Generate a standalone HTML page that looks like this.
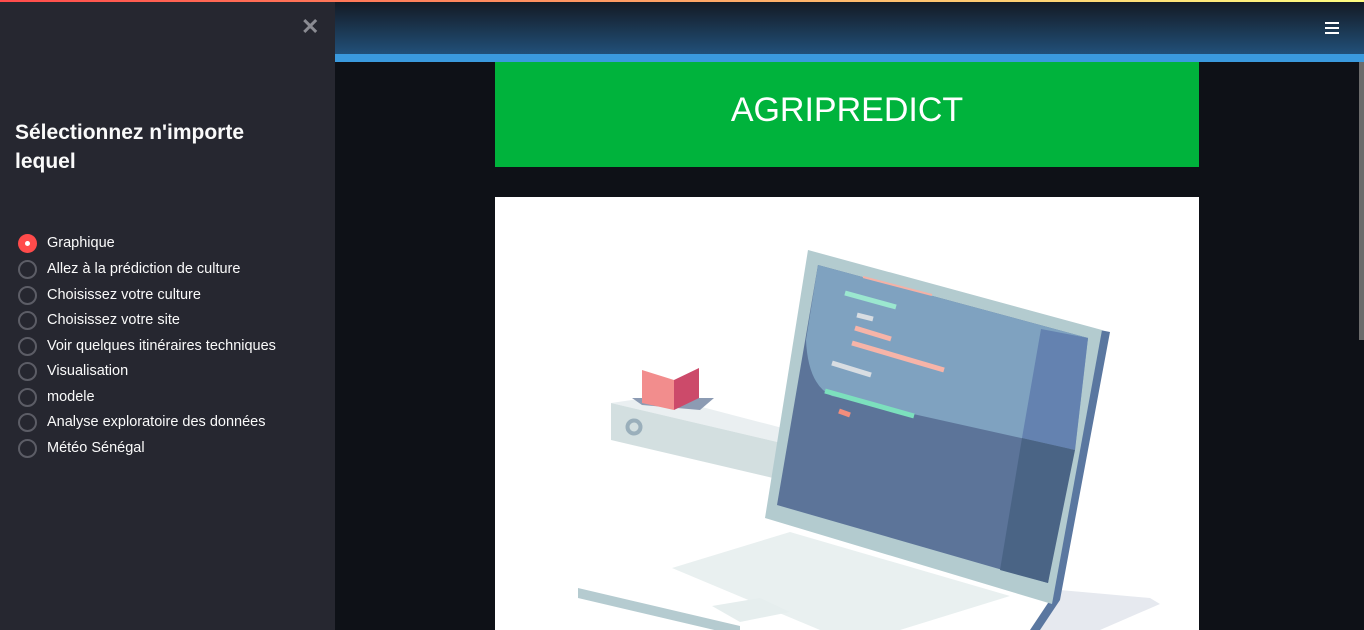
<!DOCTYPE html>
<html><head><meta charset="utf-8"><style>
*{margin:0;padding:0;box-sizing:border-box}
body{width:1364px;height:630px;overflow:hidden;background:#0e1117;font-family:"Liberation Sans",sans-serif;position:relative}
.topbar{position:absolute;left:0;top:0;width:1364px;height:2px;background:linear-gradient(90deg,#ff4b4b,#fffd80)}
.side{position:absolute;left:0;top:2px;width:335px;height:628px;background:#262730;color:#fafafa}
.close{position:absolute;left:301px;top:12px;font-size:22px;color:#8a8b92;font-weight:bold}
.side h2{position:absolute;left:15px;top:116px;font-size:21px;line-height:29px;font-weight:bold;width:250px}
.radio{position:absolute;left:18px;height:20px;display:flex;align-items:center;font-size:14.5px;color:#fafafa}
.radio i{width:19px;height:19px;border-radius:50%;border:2px solid #5c5d66;display:inline-block;margin-right:10px}
.radio i.on{border:none;background:#ff4b4b;position:relative}
.radio i.on:after{content:"";position:absolute;left:7px;top:7px;width:5px;height:5px;border-radius:50%;background:#fff}
.hdr{position:absolute;left:335px;top:2px;width:1029px;height:52px;background:linear-gradient(180deg,#141a24,#215079)}
.blue{position:absolute;left:335px;top:54px;width:1029px;height:8px;background:#3a9ade}
.menu{position:absolute;left:1325px;top:22px;width:14px}
.menu div{height:2px;background:#fff;margin-bottom:3px}
.green{position:absolute;left:495px;top:62px;width:704px;height:105px;background:#00b33c;color:#fff;font-size:34px;text-align:center;line-height:96px}
.img{position:absolute;left:495px;top:197px;width:704px;height:433px;background:#fff;overflow:hidden}
.scroll{position:absolute;left:1359px;top:62px;width:5px;height:278px;background:#6b6b6b}
</style></head><body>
<div class="topbar"></div>
<div class="side">
<div class="close">✕</div>
<h2>Sélectionnez n'importe lequel</h2>
</div>
<div class="radio" style="top:233px"><i class="on"></i>Graphique</div>
<div class="radio" style="top:259px"><i></i>Allez à la prédiction de culture</div>
<div class="radio" style="top:285px"><i></i>Choisissez votre culture</div>
<div class="radio" style="top:310px"><i></i>Choisissez votre site</div>
<div class="radio" style="top:336px"><i></i>Voir quelques itinéraires techniques</div>
<div class="radio" style="top:361px"><i></i>Visualisation</div>
<div class="radio" style="top:387px"><i></i>modele</div>
<div class="radio" style="top:412px"><i></i>Analyse exploratoire des données</div>
<div class="radio" style="top:438px"><i></i>Météo Sénégal</div>
<div class="hdr"></div>
<div class="blue"></div>
<div class="menu"><div></div><div></div><div></div></div>
<div class="green">AGRIPREDICT</div>
<div class="img">
<svg width="704" height="433" viewBox="495 197 704 433">
<polygon points="1060,590 1150,598 1160,604 1100,630 1040,630" fill="#e6e9ef"/>
<polygon points="672,568 790,532 1010,596 900,630 820,630" fill="#e9f0f0"/>
<polygon points="712,606 760,598 790,612 740,622" fill="#e6eeee"/>
<polygon points="578,588 740,626 740,636 578,598" fill="#b5cbd0"/>
<polygon points="611,403 660,396 790,430 790,445" fill="#eaeff1"/>
<polygon points="611,403 790,445 790,482 611,440" fill="#d3dfe0"/>
<circle cx="634" cy="427" r="6.5" fill="none" stroke="#9aafbb" stroke-width="4"/>
<polygon points="632,398 714,398 700,410 642,405" fill="#8c9bb3"/>
<polygon points="642,370 674,380 674,410 642,403" fill="#f28d8d"/>
<polygon points="674,380 699,368 699,398 674,410" fill="#cc4a6a"/>
<polygon points="1050,600 1100,330 1110,332 1060,600 1040,630 1030,630" fill="#5a77a0"/>
<polygon points="808,250 1102,330 1052,604 765,518" fill="#b3cbcf"/>
<polygon points="818,265 1088,338 1048,583 777,505" fill="#5c7499"/>
<path d="M818,265 L1088,338 L1075,450 L832,396 Q808,385 806,340 Z" fill="#7fa2c0"/>
<polygon points="1041,329 1088,338 1075,450 1022,438" fill="#6482b0"/>
<polygon points="1022,438 1075,450 1048,583 1000,570" fill="#4a6485"/>
<g stroke-width="5">
<line x1="863" y1="277" x2="932" y2="295" stroke="#f4b1a6" stroke-width="2"/>
<line x1="845" y1="293" x2="896" y2="307" stroke="#9be7cf"/>
<line x1="857" y1="315" x2="873" y2="319" stroke="#d8dde2"/>
<line x1="855" y1="328" x2="891" y2="339" stroke="#f7b4a8"/>
<line x1="852" y1="343" x2="944" y2="370" stroke="#f7b4a8"/>
<line x1="832" y1="363" x2="871" y2="375" stroke="#d8dde2"/>
<line x1="825" y1="391" x2="914" y2="416" stroke="#7ce0bd"/>
<line x1="839" y1="411" x2="850" y2="415" stroke="#f28d7c"/>
</g>
</svg>
</div>
<div class="scroll"></div>
</body></html>
